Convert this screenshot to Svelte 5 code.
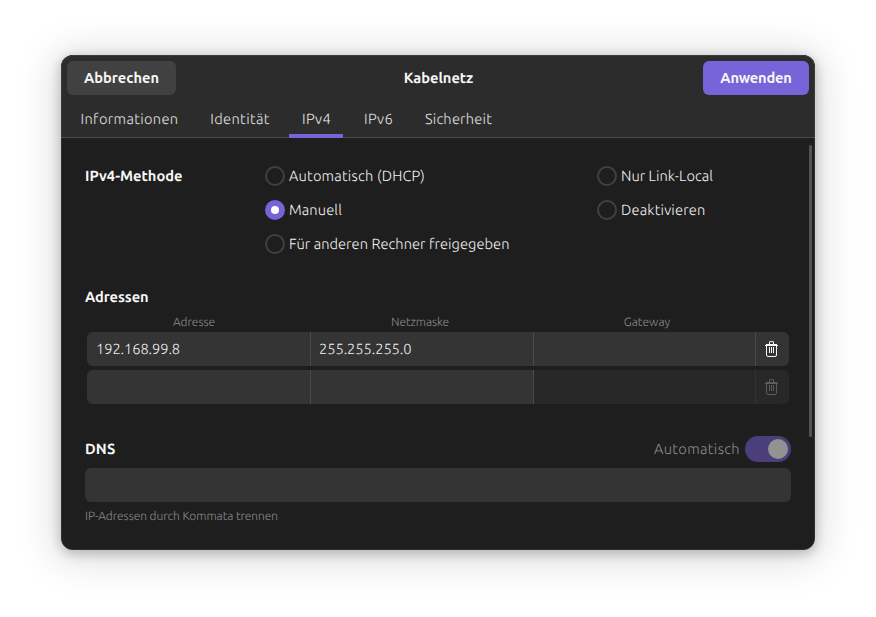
<script>
  const tabs = [
    { label: 'Informationen', width: 122, text: 98 },
    { label: 'Identität', width: 83, text: 59.5 },
    { label: 'IPv4', width: 54, text: 29, active: true },
    { label: 'IPv6', width: 54, text: 29 },
    { label: 'Sicherheit', width: 90, text: 67 }
  ];
  const methods = [
    { label: 'Automatisch (DHCP)', text: 136 },
    { label: 'Nur Link-Local', text: 92 },
    { label: 'Manuell', text: 53 },
    { label: 'Deaktivieren', text: 84.5 },
    { label: 'Für anderen Rechner freigegeben', text: 220.5 }
  ];
  let selected = $state('Manuell');

  // Tracks a label out or in so that it occupies the given advance width.
  function fit(node, width) {
    const natural = node.getBoundingClientRect().width;
    node.style.letterSpacing = `${(width - natural) / node.textContent.length}px`;
  }
</script>

{#snippet trash()}
  <svg class="trash" width="14" height="16" viewBox="0 0 14 16" fill="none" stroke="currentColor">
    <path d="M4.500 3V1q0-.4.4-.4h3.200q.4 0 .4.4v2" />
    <path d="M1 3h11v1h1v1H0V4h1z" fill="currentColor" stroke="none" />
    <path d="M1.500 5v9q0 1.500 1.500 1.500h7q1.500 0 1.500-1.500V5" />
    <path d="M4.500 6v6M6.500 6v6M8.500 6v6" />
  </svg>
{/snippet}

<main>
  <section class="window">
    <header>
      <div class="titlebar">
        <button class="cancel"><span use:fit={75}>Abbrechen</span></button>
        <h1><span use:fit={69.5}>Kabelnetz</span></h1>
        <button class="apply"><span use:fit={71.5}>Anwenden</span></button>
      </div>
      <nav>
        {#each tabs as tab}
          <div class="tab" class:active={tab.active} style="width: {tab.width}px">
            <span use:fit={tab.text}>{tab.label}</span>
          </div>
        {/each}
      </nav>
    </header>

    <div class="body">
      <div class="content">
        <div class="method">
          <h2><span use:fit={97.5}>IPv4-Methode</span></h2>
          <div class="radios">
            {#each methods as m}
              <label>
                <input type="radio" name="method" value={m.label} bind:group={selected} />
                <span use:fit={m.text}>{m.label}</span>
              </label>
            {/each}
          </div>
        </div>

        <h2 class="addresses"><span use:fit={63.5}>Adressen</span></h2>
        <div class="columns">
          <div><span use:fit={42}>Adresse</span></div>
          <div><span use:fit={58}>Netzmaske</span></div>
          <div><span use:fit={46.5}>Gateway</span></div>
        </div>
        <div class="row">
          <div class="cell"><span use:fit={84}>192.168.99.8</span></div>
          <div class="cell"><span use:fit={92.5}>255.255.255.0</span></div>
          <div class="cell"></div>
          <div class="cell remove">{@render trash()}</div>
        </div>
        <div class="row">
          <div class="cell"></div>
          <div class="cell"></div>
          <div class="cell off"></div>
          <div class="cell off remove">{@render trash()}</div>
        </div>

        <div class="dns">
          <h2><span use:fit={30.5}>DNS</span></h2>
          <div class="auto">
            <span use:fit={86}>Automatisch</span>
            <div class="switch"><i></i></div>
          </div>
        </div>
        <div class="entry"></div>
        <p><span use:fit={193}>IP-Adressen durch Kommata trennen</span></p>
      </div>
      <div class="scrollbar"></div>
    </div>
  </section>
</main>

<style>
  :global(body) { background: #fff; overflow: hidden; }
  * { box-sizing: border-box; }
  main {
    width: 876px;
    height: 617px;
    padding: 55px 61px 67px;
    color: #f2f2f2;
    font: 350 14.667px/20px Ubuntu, 'Noto Sans', 'Open Sans', sans-serif;
    text-rendering: geometricPrecision;
  }
  span { display: inline-block; white-space: nowrap; }
  .window {
    width: 754px;
    height: 495px;
    display: flex;
    flex-direction: column;
    border-radius: 12px;
    overflow: hidden;
    background: #1e1e1e;
    position: relative;
    box-shadow: 0 3px 12px 1px rgba(0, 0, 0, .22), 0 4px 40px 6px rgba(0, 0, 0, .14);
  }
  .window::after {
    content: '';
    position: absolute;
    inset: 0;
    border: 1px solid rgba(255, 255, 255, .08);
    border-radius: 12px;
    pointer-events: none;
  }
  header { height: 83px; background: #2c2c2c; border-bottom: 1px solid #4b4b4b; }
  .titlebar { display: flex; justify-content: space-between; padding: 6px 6px 0; height: 46px; }
  h1, h2 { margin: 0; font-size: 14.667px; font-weight: 600; line-height: 20px; color: #f7f7f7; }
  h1 { padding: 7px 2px 0 0; }
  button {
    border: 0;
    padding: 0;
    height: 34px;
    border-radius: 6px;
    color: #f7f7f7;
    font: inherit;
    font-weight: 600;
  }
  .cancel { width: 109px; background: #414141; }
  .apply { width: 106px; background: #7764d8; }
  nav { display: flex; gap: 8px; padding-left: 7px; height: 37px; }
  .tab { height: 37px; padding: 8px 0 0 1px; text-align: center; color: #e0e0e0; }
  .tab.active { border-bottom: 4px solid #7764d8; color: #e8e8e8; }
  .body { display: flex; flex: 1; }
  .content { width: 730px; padding: 21px 0 0 24px; }
  .method { display: flex; height: 121px; padding-top: 7px; }
  .method h2 { width: 180px; }
  .radios { display: grid; grid-template-columns: 332px 160px; grid-auto-rows: 34px; }
  label { display: flex; gap: 4px; height: 20px; white-space: nowrap; }
  input {
    appearance: none;
    flex: none;
    width: 20px;
    height: 20px;
    margin: 0;
    border: 2px solid #414141;
    border-radius: 50%;
  }
  input:checked { border: 6px solid #7764d8; background: #fff; }
  .addresses { padding-top: 7px; height: 33px; }
  .columns { display: flex; padding-left: 2px; height: 19px; font-size: 12px; line-height: 20px; color: #8c8c8c; text-align: center; }
  .columns div { width: 226px; padding-right: 12px; }
  .columns div:nth-child(3) { width: 228px; }
  .row { display: flex; width: 702px; height: 34px; margin: 0 0 4px 2px; border-radius: 6px; overflow: hidden; }
  .cell { width: 223px; background: #343434; border-right: 1px solid #4a4a4a; padding: 7px 8px; }
  .cell:first-child { width: 224px; padding-left: 9px; }
  .cell:nth-child(3) { width: 222px; }
  .cell.off { background: #282828; border-color: #333; }
  .cell.remove { width: 33px; border-right: 0; padding: 9px 0 0 9px; color: #f5f5f5; }
  .cell.off.remove { color: #5c5c5c; }
  .trash { display: block; }
  .dns { display: flex; justify-content: space-between; width: 706px; height: 32px; margin-top: 32px; }
  .dns h2 { padding-top: 3px; }
  .auto { display: flex; gap: 5px; height: 26px; align-items: center; color: #8c8c8c; }
  .switch { width: 46px; height: 26px; padding: 3px; display: flex; justify-content: flex-end; border-radius: 13px; background: #4a3f7a; }
  .switch i { width: 20px; height: 20px; border-radius: 50%; background: #929292; }
  .entry { width: 706px; height: 34px; border-radius: 6px; background: #343434; }
  p { margin: 5px 0 0; font-size: 12px; line-height: 20px; color: #8c8c8c; }
  .scrollbar { width: 3px; height: 292px; margin: 7px 0 0 18px; border-radius: 2px; background: #525252; }
</style>
